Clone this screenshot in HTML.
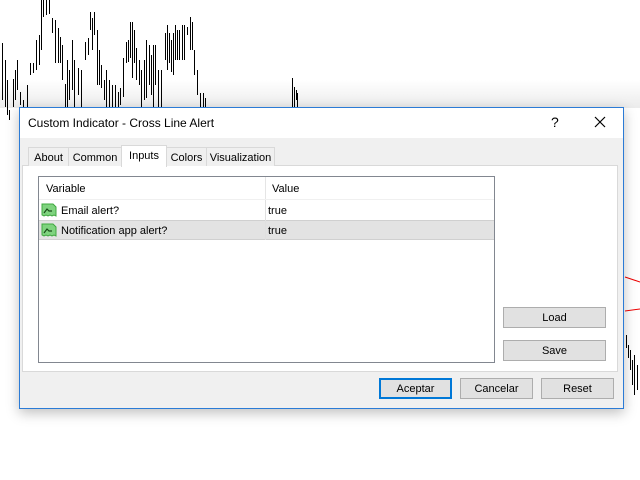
<!DOCTYPE html>
<html><head><style>
body{margin:0;width:640px;height:480px;background:#fff;position:relative;overflow:hidden;font-family:"Liberation Sans",sans-serif;font-size:11px;color:#000}
.a{position:absolute}
.tab{position:absolute;top:147px;height:19px;border:1px solid #d9d9d9;border-bottom:none;background:#f0f0f0;text-align:center;line-height:20px;box-sizing:border-box}
.btn{position:absolute;background:#e1e1e1;border:1px solid #adadad;box-sizing:border-box;text-align:center;line-height:20px;height:21px}
.ic{position:absolute;left:41px;width:16px;height:14px}
</style></head><body>
<svg class="a" style="left:0;top:0" width="640" height="480">
<g stroke="#000" stroke-width="1" id="bars"></g>
<line x1="625" y1="277" x2="640" y2="282" stroke="#e00"/>
<line x1="625" y1="311" x2="640" y2="309" stroke="#e00"/>
<g stroke="#000"><line x1="626.5" y1="335" x2="626.5" y2="348"/><line x1="628.5" y1="345" x2="628.5" y2="358"/><line x1="630.5" y1="350" x2="630.5" y2="370"/><line x1="632.5" y1="360" x2="632.5" y2="385"/><line x1="634.5" y1="355" x2="634.5" y2="395"/><line x1="637.5" y1="365" x2="637.5" y2="390"/></g>
</svg>
<script>
var d=[[2,43,100],[5,60,107],[7,80,115],[9,110,120],[13,79,107],[15,70,100],[17,60,90],[20,92,105],[23,100,107],[27,85,107],[30,63,75],[33,63,73],[36,40,70],[39,35,65],[41,0,50],[43,0,17],[46,0,15],[49,0,14],[52,18,33],[55,20,63],[58,28,63],[60,37,63],[62,45,80],[65,84,107],[67,60,107],[69,70,100],[72,40,90],[74,60,107],[78,68,95],[81,70,107],[85,42,60],[88,38,55],[90,12,30],[92,18,50],[94,12,35],[97,30,85],[99,50,85],[101,65,88],[104,80,100],[106,70,107],[109,80,107],[112,85,107],[115,85,107],[118,92,107],[120,88,105],[123,58,97],[126,42,63],[128,40,62],[130,22,58],[132,22,78],[134,30,63],[136,48,80],[139,60,85],[141,70,107],[144,60,100],[146,40,98],[149,45,85],[151,55,95],[153,45,107],[155,45,85],[158,70,107],[161,70,107],[165,33,60],[167,25,70],[169,33,63],[171,40,72],[173,33,75],[175,25,60],[177,30,60],[179,30,60],[182,25,60],[184,25,60],[187,27,35],[190,17,50],[192,22,50],[194,50,75],[197,70,95],[200,93,107],[203,93,107],[205,98,107],[292,78,107],[294,87,107],[296,90,100],[297,93,107]];
var g=document.getElementById('bars'),s='';d.forEach(function(b){s+='<line x1="'+(b[0]+.5)+'" y1="'+b[1]+'" x2="'+(b[0]+.5)+'" y2="'+b[2]+'"/>';});g.innerHTML=s;
</script>
<div class="a" style="left:0;top:80px;width:640px;height:28px;background:linear-gradient(rgba(0,0,0,0),rgba(0,0,0,0.08))"></div>
<div class="a" style="left:19px;top:107px;width:605px;height:302px;box-sizing:border-box;border:1px solid #2b7bd6;background:#f0f0f0;box-shadow:0 4px 12px rgba(0,0,0,0.25)"></div>
<div class="a" style="left:20px;top:108px;width:603px;height:30px;background:#fff"></div>
<div class="a" style="left:28px;top:116px;font-size:12px">Custom Indicator - Cross Line Alert</div>
<div class="a" style="left:551px;top:114px;font-size:14px">?</div>
<svg class="a" style="left:594px;top:116px" width="12" height="12"><path d="M1 1L11 11M11 1L1 11" stroke="#000" stroke-width="1.2"/></svg>
<div class="a" style="left:22px;top:165px;width:596px;height:207px;background:#fff;border:1px solid #d9d9d9;box-sizing:border-box"></div>
<div class="tab" style="left:28px;width:41px">About</div>
<div class="tab" style="left:68px;width:54px">Common</div>
<div class="tab" style="left:166px;width:41px">Colors</div>
<div class="tab" style="left:206px;width:69px">Visualization</div>
<div class="tab" style="left:121px;top:145px;height:22px;width:46px;background:#fff;line-height:20px">Inputs</div>
<div class="a" style="left:38px;top:176px;width:457px;height:187px;border:1px solid #828790;box-sizing:border-box;background:#fff"></div>
<div class="a" style="left:265px;top:177px;width:1px;height:22px;background:#e5e5e5"></div>
<div class="a" style="left:46px;top:183px">Variable</div>
<div class="a" style="left:272px;top:183px">Value</div>
<div class="a" style="left:39px;top:199px;width:455px;height:1px;background:#f0f0f0"></div>
<div class="a" style="left:39px;top:220px;width:455px;height:20px;background:#e3e3e3;border-top:1px solid #d0d0d0;border-bottom:1px solid #d0d0d0;box-sizing:border-box"></div>
<div class="a" style="left:265px;top:200px;width:1px;height:40px;background:#e0e0e0"></div>
<svg class="ic" style="top:203px" viewBox="0 0 16 14"><path d="M1 1H12L15 4V13L13 12L11 13L9 12L7 13L5 12L3 13L1 12Z" fill="#7fd37f" stroke="#3fa83f"/><path d="M3 10L6 6L8 8H11" stroke="#1a4d1a" fill="none" stroke-width="1.2"/></svg>
<svg class="ic" style="top:223px" viewBox="0 0 16 14"><path d="M1 1H12L15 4V13L13 12L11 13L9 12L7 13L5 12L3 13L1 12Z" fill="#7fd37f" stroke="#3fa83f"/><path d="M3 10L6 6L8 8H11" stroke="#1a4d1a" fill="none" stroke-width="1.2"/></svg>
<div class="a" style="left:61px;top:205px">Email alert?</div>
<div class="a" style="left:268px;top:205px">true</div>
<div class="a" style="left:61px;top:225px">Notification app alert?</div>
<div class="a" style="left:268px;top:225px">true</div>
<div class="btn" style="left:503px;top:307px;width:103px">Load</div>
<div class="btn" style="left:503px;top:340px;width:103px">Save</div>
<div class="btn" style="left:379px;top:378px;width:73px;border:2px solid #0078d7;line-height:18px">Aceptar</div>
<div class="btn" style="left:460px;top:378px;width:73px">Cancelar</div>
<div class="btn" style="left:541px;top:378px;width:73px">Reset</div>
</body></html>
